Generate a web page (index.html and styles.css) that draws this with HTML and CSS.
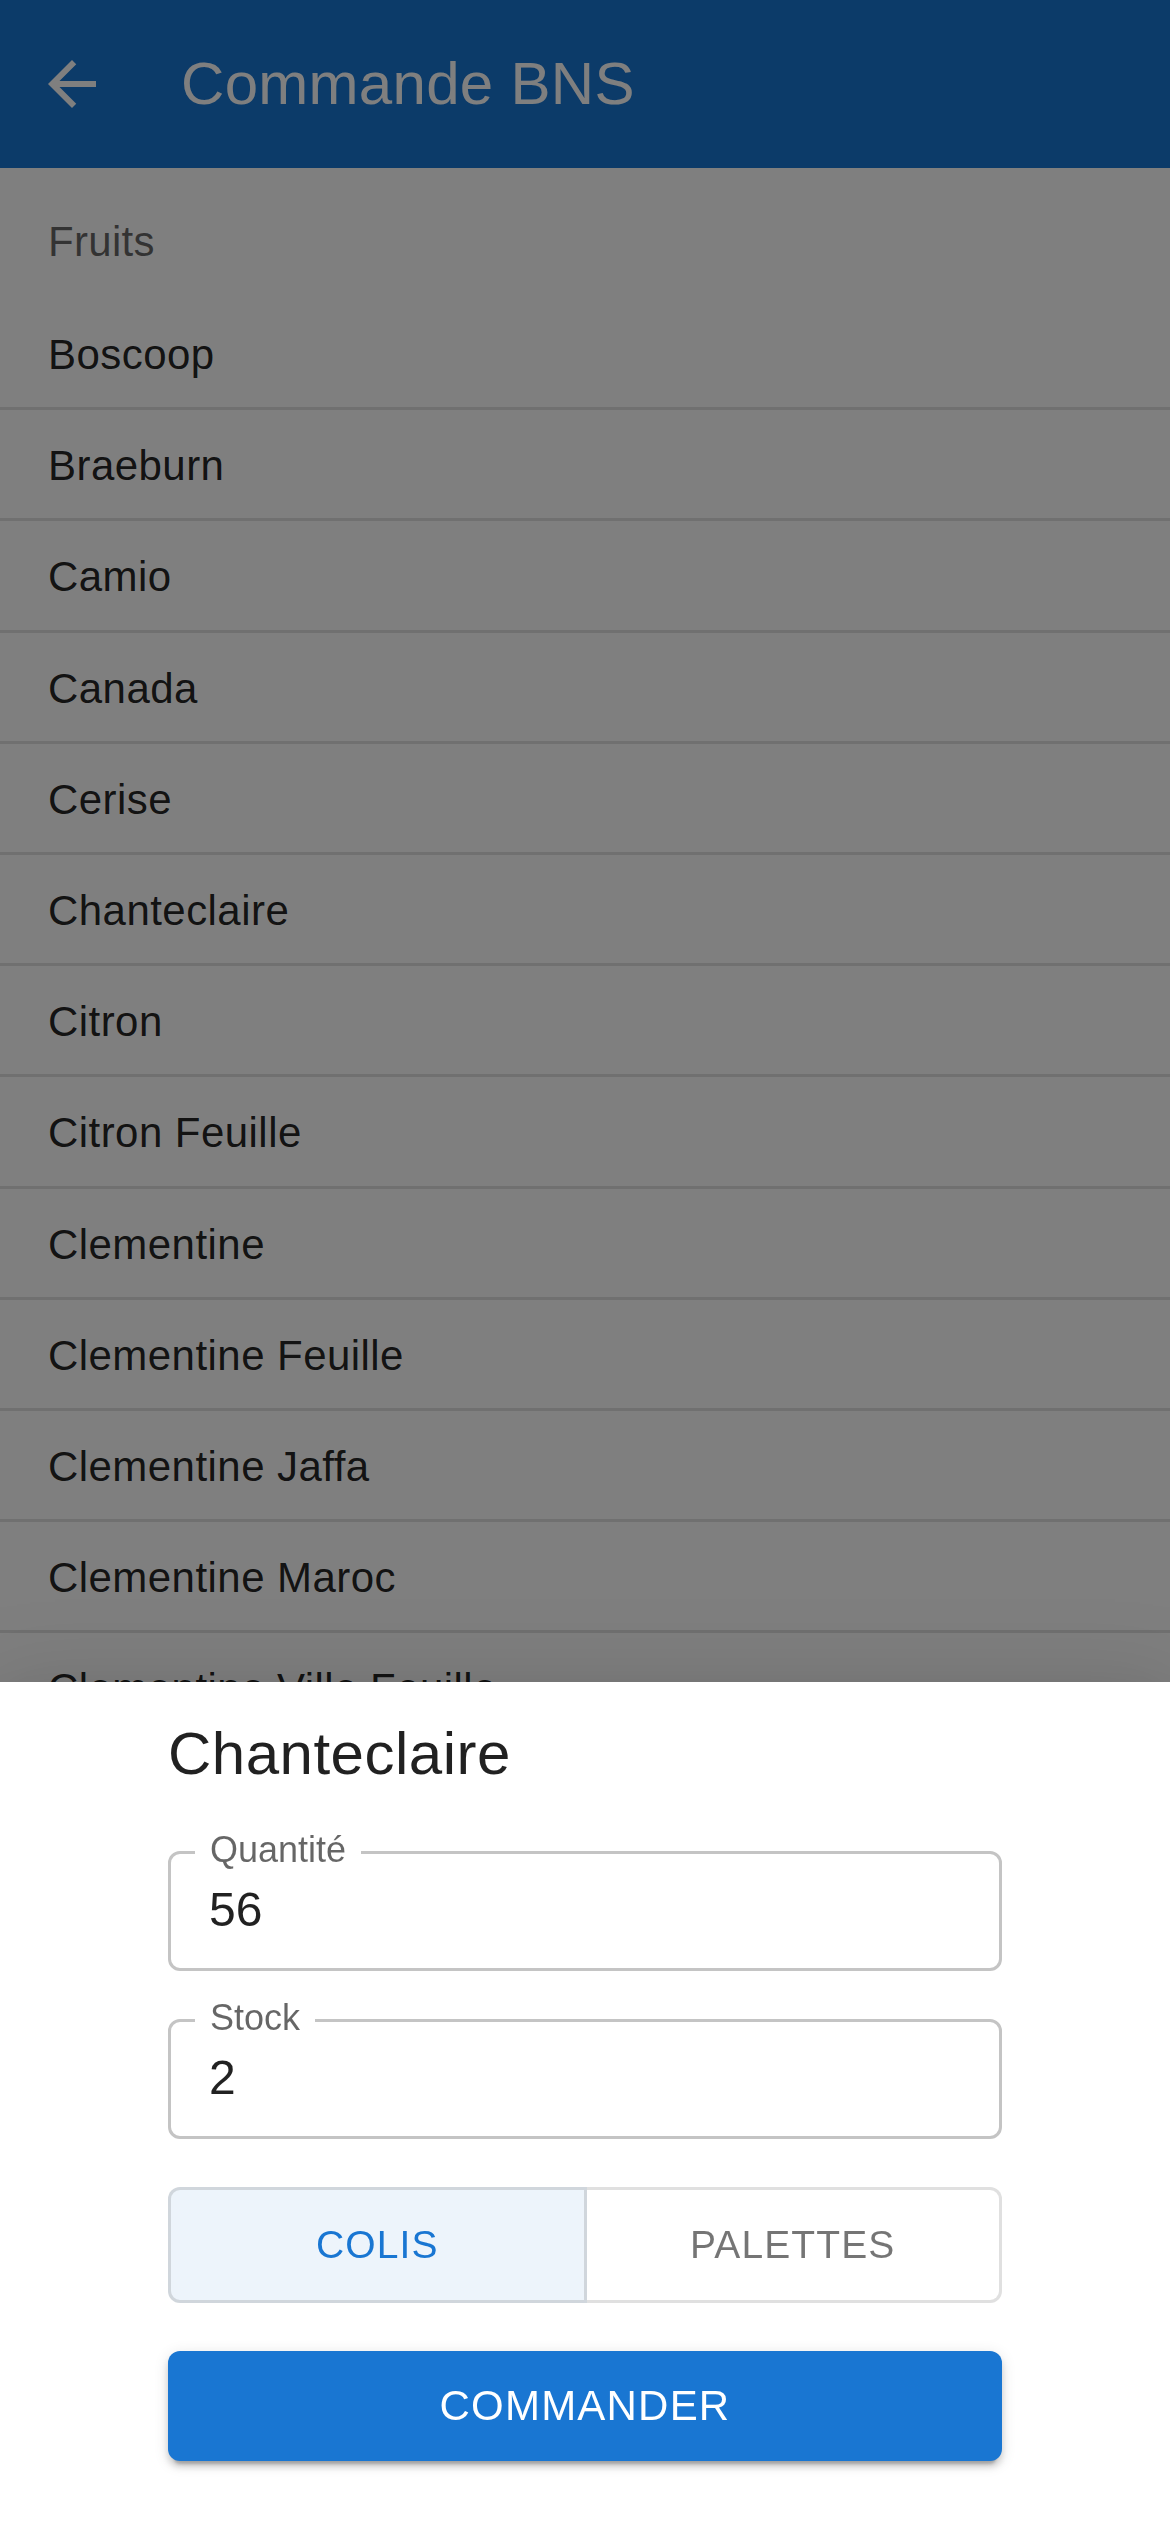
FILE: index.html
```html
<!DOCTYPE html>
<html lang="fr">
<head>
<meta charset="utf-8">
<title>Commande BNS</title>
<link rel="stylesheet" href="styles.css">
</head>
<body>
<header class="appbar">
  <svg class="back" viewBox="0 0 24 24" width="72" height="72" aria-hidden="true"><path d="M20 11H7.83l5.59-5.59L12 4l-8 8 8 8 1.41-1.41L7.83 13H20v-2z" fill="#ffffff"/></svg>
  <h1 class="title">Commande BNS</h1>
</header>
<ul class="list">
  <li class="subheader">Fruits</li>
  <li class="item">Boscoop</li>
  <li class="item">Braeburn</li>
  <li class="item">Camio</li>
  <li class="item">Canada</li>
  <li class="item">Cerise</li>
  <li class="item">Chanteclaire</li>
  <li class="item">Citron</li>
  <li class="item">Citron Feuille</li>
  <li class="item">Clementine</li>
  <li class="item">Clementine Feuille</li>
  <li class="item">Clementine Jaffa</li>
  <li class="item">Clementine Maroc</li>
  <li class="item">Clementine Ville Feuille</li>
</ul>
<div class="backdrop"></div>
<div class="sheet">
  <h2 class="sheet-title">Chanteclaire</h2>
  <div class="form">
    <div class="field">
      <span class="field-label">Quantité</span>
      <span class="field-value">56</span>
    </div>
    <div class="field">
      <span class="field-label">Stock</span>
      <span class="field-value">2</span>
    </div>
    <div class="toggle">
      <button class="toggle-btn selected">COLIS</button>
      <button class="toggle-btn">PALETTES</button>
    </div>
    <button class="submit">COMMANDER</button>
  </div>
</div>
</body>
</html>
```
FILE: styles.css
```css
html, body {
  margin: 0;
  padding: 0;
}
body {
  width: 1170px;
  min-height: 2532px;
  background: #ffffff;
  font-family: "Liberation Sans", Arial, sans-serif;
  color: rgba(0, 0, 0, 0.87);
  overflow: hidden;
}
.appbar {
  height: 168px;
  background: #1976d2;
  display: flex;
  align-items: center;
  padding-left: 36px;
  box-sizing: border-box;
}
.back {
  flex: none;
  display: block;
}
.title {
  margin: 0 0 0 73px;
  font-size: 60px;
  font-weight: 400;
  line-height: 1;
  letter-spacing: 0.3px;
  color: #ffffff;
}
.list {
  list-style: none;
  margin: 0;
  padding: 0;
}
.subheader {
  height: 131px;
  box-sizing: border-box;
  padding: 53px 48px 0;
  font-size: 42px;
  line-height: 42px;
  letter-spacing: 0.3px;
  color: rgba(0, 0, 0, 0.6);
}
.item {
  height: 111.2px;
  box-sizing: border-box;
  padding: 24px 48px 0;
  font-size: 42px;
  line-height: 63px;
  letter-spacing: 0.45px;
  color: rgba(0, 0, 0, 0.87);
  border-bottom: 3px solid #e0e0e0;
  white-space: nowrap;
}
.backdrop {
  position: fixed;
  inset: 0;
  background: rgba(0, 0, 0, 0.5);
  z-index: 10;
}
.sheet {
  position: fixed;
  left: 0;
  right: 0;
  bottom: 0;
  height: 850px;
  box-sizing: border-box;
  background: #ffffff;
  z-index: 20;
  padding: 24px 168px 0 168px;
  box-shadow: 0 24px 30px -15px rgba(0,0,0,0.2), 0 48px 72px 6px rgba(0,0,0,0.14), 0 18px 90px 15px rgba(0,0,0,0.12);
}
.sheet-title {
  margin: 0 0 49px;
  font-size: 60px;
  font-weight: 400;
  line-height: 96px;
  letter-spacing: 0.5px;
  color: rgba(0, 0, 0, 0.87);
}
.form {
  display: flex;
  flex-direction: column;
  gap: 48px;
}
.field {
  position: relative;
  height: 120px;
  box-sizing: border-box;
  border: 3px solid #c4c4c4;
  border-radius: 12px;
  display: flex;
  align-items: center;
  padding: 0 39px 4px 38px;
}
.field-label {
  position: absolute;
  left: 24px;
  top: -22.5px;
  padding: 0 15px;
  background: #ffffff;
  font-size: 36px;
  line-height: 36px;
  color: rgba(0, 0, 0, 0.6);
}
.field-value {
  font-size: 48px;
  line-height: 69px;
  color: rgba(0, 0, 0, 0.87);
}
.toggle {
  display: flex;
  height: 116px;
}
.toggle-btn {
  flex: 1 1 0;
  margin: 0;
  font-family: "Liberation Sans", Arial, sans-serif;
  font-size: 39px;
  letter-spacing: 1.11px;
  text-transform: uppercase;
  color: rgba(0, 0, 0, 0.54);
  background: #ffffff;
  border: 3px solid rgba(0, 0, 0, 0.12);
  padding: 0;
}
.toggle-btn:first-child {
  border-radius: 12px 0 0 12px;
}
.toggle-btn:last-child {
  border-radius: 0 12px 12px 0;
  border-left: none;
}
.toggle-btn.selected {
  color: #1976d2;
  background: #edf4fb;
}
.submit {
  height: 110px;
  margin: 0;
  padding: 0;
  border: none;
  border-radius: 12px;
  background: #1976d2;
  color: #ffffff;
  font-family: "Liberation Sans", Arial, sans-serif;
  font-size: 42px;
  letter-spacing: 1.2px;
  text-transform: uppercase;
  box-shadow: 0 9px 3px -6px rgba(0,0,0,0.2), 0 6px 6px 0 rgba(0,0,0,0.14), 0 3px 15px 0 rgba(0,0,0,0.12);
}
```
